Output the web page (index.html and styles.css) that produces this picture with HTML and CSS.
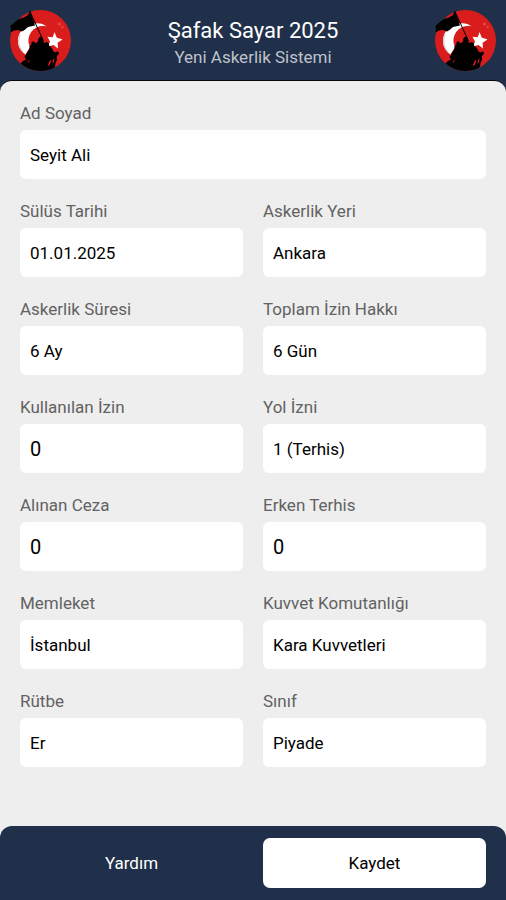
FILE: index.html
```html
<!DOCTYPE html>
<html lang="tr">
<head>
    <meta charset="UTF-8">
    <meta name="viewport" content="width=device-width, initial-scale=1.0">
    <title>Şafak Sayar 2025</title>
    <link rel="stylesheet" href="styles.css">
</head>
<body>
    <svg class="sprite" width="0" height="0" aria-hidden="true">
        <symbol id="emblem" viewBox="0 0 61 61">
            <clipPath id="disc"><circle cx="30.5" cy="30.5" r="30.5"/></clipPath>
            <circle cx="30.5" cy="30.5" r="30.5" fill="#d91c1c"/>
            <circle cx="49.5" cy="14" r="1.500" fill="#ea4848"/>
            <circle cx="52.5" cy="17" r="1.500" fill="#e23a3a"/>
            <!-- crescent and star -->
            <path d="M36.700 16.500C32 12.500 25 12 18 15.500C11 19 7.500 25 8 32C8.300 37 11 41.500 15.500 44.500L20 37C17.500 32 18 26.500 21.500 21.500C25 17 31 15 36.700 16.500Z" fill="#fff"/>
            <path d="M10 24C7.800 30 8.500 37 13 42" fill="none" stroke="#cfcfcf" stroke-width="1.200"/>
            <path d="M44.500 22L46.700 27.500L52.500 29.500L47.600 32.800L48 38.500L43.500 35L38 36.500L40 31.500L37.500 26.800L42.700 27.300Z" fill="#fff"/>
            <!-- soldiers -->
            <g clip-path="url(#disc)">
                <path d="M10 54L13 51L16 49.500L14.500 47L16.500 43.500L19.500 39L19.500 36L21.500 34.500L21.300 32.500L23 31.300L25 32.500L25.500 33.500L28 31.500L28.300 28.500L30.500 26.500L32.500 28L33 31L34.500 33L36.500 32L38.800 33L39 35.500L41.500 37.500L43.500 41.500L46 42.500L47 41.300L49 42.500L48.500 44.500L46.800 46L47 50L45.500 53L45 57L42 61L20 61Z" fill="#000"/>
                <path d="M37.500 56.500L39.500 51L41.500 50L40 54.500ZM43 50L44.500 48L44 52L42.500 54Z" fill="#d91c1c"/>
                <path d="M17 52L20 49.500L19 52.500Z" fill="#a51515"/>
            </g>
            <!-- flag and pole -->
            <path d="M19.200 2L20.500 2L25 15.500L18 17L14.500 20L12 21.500L8 20L4 20.500L.5 22.500L1 19L.3 16L5 12L9 9L14 7.500L18 5Z" fill="#000"/>
            <path d="M19.700 1L33.500 31" stroke="#000" stroke-width="1" fill="none"/>
        </symbol>
    </svg>

    <header class="header">
        <svg class="logo" aria-hidden="true"><use href="#emblem"/></svg>
        <div class="heading">
            <h1>Şafak Sayar 2025</h1>
            <p>Yeni Askerlik Sistemi</p>
        </div>
        <svg class="logo" aria-hidden="true"><use href="#emblem"/></svg>
    </header>

    <main class="content">
        <form id="serviceForm" class="form">
            <div class="field wide">
                <label for="name">Ad Soyad</label>
                <input type="text" id="name" name="name" value="Seyit Ali">
            </div>
            <div class="field">
                <label for="startDate">Sülüs Tarihi</label>
                <input type="text" id="startDate" name="startDate" value="01.01.2025">
            </div>
            <div class="field">
                <label for="place">Askerlik Yeri</label>
                <select id="place" name="place">
                    <option>Ankara</option>
                </select>
            </div>
            <div class="field">
                <label for="duration">Askerlik Süresi</label>
                <select id="duration" name="duration">
                    <option>6 Ay</option>
                </select>
            </div>
            <div class="field">
                <label for="leave">Toplam İzin Hakkı</label>
                <select id="leave" name="leave">
                    <option>6 Gün</option>
                </select>
            </div>
            <div class="field">
                <label for="usedLeave">Kullanılan İzin</label>
                <input type="text" inputmode="numeric" class="number" id="usedLeave" name="usedLeave" value="0">
            </div>
            <div class="field">
                <label for="roadLeave">Yol İzni</label>
                <select id="roadLeave" name="roadLeave">
                    <option>1 (Terhis)</option>
                </select>
            </div>
            <div class="field">
                <label for="penalty">Alınan Ceza</label>
                <input type="text" inputmode="numeric" class="number" id="penalty" name="penalty" value="0">
            </div>
            <div class="field">
                <label for="early">Erken Terhis</label>
                <input type="text" inputmode="numeric" class="number" id="early" name="early" value="0">
            </div>
            <div class="field">
                <label for="hometown">Memleket</label>
                <select id="hometown" name="hometown">
                    <option>İstanbul</option>
                </select>
            </div>
            <div class="field">
                <label for="force">Kuvvet Komutanlığı</label>
                <select id="force" name="force">
                    <option>Kara Kuvvetleri</option>
                </select>
            </div>
            <div class="field">
                <label for="rank">Rütbe</label>
                <select id="rank" name="rank">
                    <option>Er</option>
                </select>
            </div>
            <div class="field">
                <label for="branch">Sınıf</label>
                <select id="branch" name="branch">
                    <option>Piyade</option>
                </select>
            </div>
        </form>
    </main>

    <footer class="footer">
        <button type="button" class="help">Yardım</button>
        <button type="submit" form="serviceForm" class="save">Kaydet</button>
    </footer>
</body>
</html>
```

FILE: styles.css
```css
* {
    box-sizing: border-box;
}

body {
    display: flex;
    flex-direction: column;
    min-height: 100vh;
    margin: 0;
    background-color: #eee;
    font-family: Roboto, "Liberation Sans", sans-serif;
    font-size: 17px;
    line-height: 24px;
    color: #000;
}

.sprite {
    position: absolute;
}

.header {
    display: flex;
    justify-content: space-between;
    align-items: center;
    padding: 10px 10px 21px;
    background-color: #20304a;
}

.logo {
    width: 61px;
    height: 61px;
}

.heading {
    padding-top: 4px;
    text-align: center;
}

h1 {
    margin: 0;
    font-size: 22px;
    font-weight: 400;
    line-height: 28px;
    color: #fff;
}

.heading p {
    margin: 0;
    color: #bfc2cb;
}

/* the panel slides over the lower edge of the header */
.content {
    flex: 1;
    margin-top: -12px;
    padding: 20px;
    border-top: 1px solid #04060c;
    border-radius: 12px 12px 0 0;
    background-color: #eee;
}

.form {
    display: grid;
    grid-template-columns: 1fr 1fr;
    gap: 20px;
}

.wide {
    grid-column: 1 / -1;
}

label {
    display: block;
    margin-bottom: 5px;
    color: #626262;
}

input, select {
    display: block;
    width: 100%;
    height: 49px;
    padding: 0 10px;
    border: none;
    border-radius: 6px;
    background-color: #fff;
    font: inherit;
    color: #000;
    appearance: none;
}

.number {
    font-size: 20px;
}

.footer {
    display: grid;
    grid-template-columns: 1fr 1fr;
    gap: 20px;
    padding: 12px 20px;
    border-radius: 12px 12px 0 0;
    background-color: #20304a;
}

button {
    height: 50px;
    border: none;
    border-radius: 7px;
    font: inherit;
    cursor: pointer;
}

.help {
    background: none;
    color: #fff;
}

.save {
    background-color: #fff;
    color: #000;
}
```
